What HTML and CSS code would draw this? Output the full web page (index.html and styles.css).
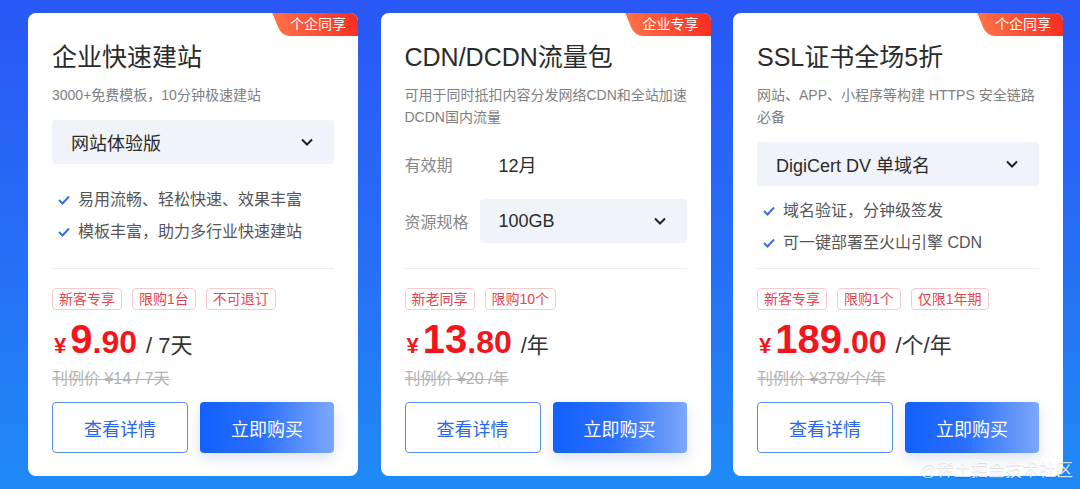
FILE: index.html
```html
<!DOCTYPE html>
<html lang="zh-CN">
<head>
    <meta charset="UTF-8">
    <meta name="viewport" content="width=device-width, initial-scale=1.0">
    <title>云产品特惠</title>
    <link rel="stylesheet" href="styles.css">
</head>
<body>

<div class="page">

    <!-- 企业快速建站 -->
    <div class="card">
        <div class="badge">个企同享</div>
        <div class="head">
            <h2 class="title">企业快速建站</h2>
            <p class="desc">3000+免费模板，10分钟极速建站</p>
            <div class="select">
                <span>网站体验版</span>
                <svg class="chevron" width="12" height="8" viewBox="0 0 12 8"><path d="M1 1.5 6 6.5 11 1.5" /></svg>
            </div>
        </div>
        <ul class="checks">
            <li><svg class="check" width="12" height="10" viewBox="0 0 12 10"><path d="M1 5 4.5 8.5 11 1.5" /></svg>易用流畅、轻松快速、效果丰富</li>
            <li><svg class="check" width="12" height="10" viewBox="0 0 12 10"><path d="M1 5 4.5 8.5 11 1.5" /></svg>模板丰富，助力多行业快速建站</li>
        </ul>
        <div class="foot">
            <div class="tags">
                <span class="tag">新客专享</span>
                <span class="tag">限购1台</span>
                <span class="tag">不可退订</span>
            </div>
            <div class="price">
                <span class="yen">¥</span><span class="int">9</span><span class="dec">.90</span><span class="unit">/ 7天</span>
            </div>
            <div class="origin">刊例价 ¥14 / 7天</div>
            <div class="actions">
                <button class="btn btn-outline">查看详情</button>
                <button class="btn btn-primary">立即购买</button>
            </div>
        </div>
    </div>

    <!-- CDN/DCDN流量包 -->
    <div class="card">
        <div class="badge">企业专享</div>
        <div class="head">
            <h2 class="title">CDN/DCDN流量包</h2>
            <p class="desc">可用于同时抵扣内容分发网络CDN和全站加速DCDN国内流量</p>
            <div class="rows">
                <div class="row">
                    <span class="label">有效期</span>
                    <span class="value">12月</span>
                </div>
                <div class="row">
                    <span class="label">资源规格</span>
                    <div class="select select-grow">
                        <span>100GB</span>
                        <svg class="chevron" width="12" height="8" viewBox="0 0 12 8"><path d="M1 1.5 6 6.5 11 1.5" /></svg>
                    </div>
                </div>
            </div>
        </div>
        <div class="foot">
            <div class="tags">
                <span class="tag">新老同享</span>
                <span class="tag">限购10个</span>
            </div>
            <div class="price">
                <span class="yen">¥</span><span class="int">13</span><span class="dec">.80</span><span class="unit">/年</span>
            </div>
            <div class="origin">刊例价 ¥20 /年</div>
            <div class="actions">
                <button class="btn btn-outline">查看详情</button>
                <button class="btn btn-primary">立即购买</button>
            </div>
        </div>
    </div>

    <!-- SSL证书 -->
    <div class="card">
        <div class="badge">个企同享</div>
        <div class="head">
            <h2 class="title">SSL证书全场5折</h2>
            <p class="desc">网站、APP、小程序等构建 HTTPS 安全链路必备</p>
            <div class="select">
                <span>DigiCert DV 单域名</span>
                <svg class="chevron" width="12" height="8" viewBox="0 0 12 8"><path d="M1 1.5 6 6.5 11 1.5" /></svg>
            </div>
        </div>
        <ul class="checks">
            <li><svg class="check" width="12" height="10" viewBox="0 0 12 10"><path d="M1 5 4.5 8.5 11 1.5" /></svg>域名验证，分钟级签发</li>
            <li><svg class="check" width="12" height="10" viewBox="0 0 12 10"><path d="M1 5 4.5 8.5 11 1.5" /></svg>可一键部署至火山引擎 CDN</li>
        </ul>
        <div class="foot">
            <div class="tags">
                <span class="tag">新客专享</span>
                <span class="tag">限购1个</span>
                <span class="tag">仅限1年期</span>
            </div>
            <div class="price">
                <span class="yen">¥</span><span class="int">189</span><span class="dec">.00</span><span class="unit">/个/年</span>
            </div>
            <div class="origin">刊例价 ¥378/个/年</div>
            <div class="actions">
                <button class="btn btn-outline">查看详情</button>
                <button class="btn btn-primary">立即购买</button>
            </div>
        </div>
    </div>

    <div class="watermark">@稀土掘金技术社区</div>
</div>

</body>
</html>
```

FILE: styles.css
```css
body {
    margin: 0;
    font-family: "Liberation Sans", "Noto Sans CJK SC", sans-serif;
}
.page {
    position: relative;
    width: 1080px;
    height: 489px;
    box-sizing: border-box;
    padding: 13px 0 0 28px;
    display: flex;
    align-items: flex-start;
    gap: 22.5px;
    overflow: hidden;
    background: linear-gradient(180deg, #2a57f5 0%, #2670f5 55%, #1f8bf6 100%);
}
.card {
    position: relative;
    width: 330px;
    height: 463px;
    box-sizing: border-box;
    padding: 28px 24px 23px;
    background: #fff;
    border-radius: 8px;
    overflow: hidden;
    display: flex;
    flex-direction: column;
    flex-shrink: 0;
}

/* 角标 */
.badge {
    position: absolute;
    top: 0;
    right: 0;
    z-index: 1;
    width: 80px;
    height: 23px;
    line-height: 23px;
    text-align: center;
    font-size: 14px;
    color: #fff;
}
.badge::before {
    content: '';
    position: absolute;
    top: 0;
    bottom: 0;
    left: -1px;
    right: -12px;
    z-index: -1;
    background: linear-gradient(90deg, #ff6f47, #f5241c);
    transform: skewX(22deg);
    border-bottom-left-radius: 8px;
}

.title {
    margin: 0;
    font-size: 25px;
    line-height: 32px;
    font-weight: 400;
    color: #2b2b2b;
}
.desc {
    margin: 11px -6px 0 0;
    font-size: 14px;
    line-height: 22px;
    color: #808080;
}
.select {
    margin-top: 14px;
    height: 44px;
    box-sizing: border-box;
    padding: 0 21px 0 19px;
    display: flex;
    align-items: center;
    justify-content: space-between;
    background: #f0f3f9;
    border-radius: 4px;
    font-size: 18px;
    color: #2b2b2b;
}
.chevron path {
    fill: none;
    stroke: #222;
    stroke-width: 2;
}

.rows {
    margin-top: 14px;
    display: flex;
    flex-direction: column;
    gap: 13px;
}
.row {
    display: flex;
    align-items: center;
    height: 44px;
}
.label {
    width: 75px;
    flex-shrink: 0;
    font-size: 16px;
    color: #888;
}
.value {
    padding-left: 19px;
    font-size: 18px;
    color: #2b2b2b;
}
.select-grow {
    flex: 1;
    margin-top: 0;
}

.checks {
    flex: 1;
    margin: 0;
    padding: 0 0 0 6px;
    list-style: none;
    display: flex;
    flex-direction: column;
    justify-content: center;
    gap: 8px;
}
.checks li {
    display: flex;
    align-items: center;
    font-size: 16px;
    line-height: 24px;
    color: #555;
}
.check {
    margin-right: 8px;
    flex-shrink: 0;
}
.check path {
    fill: none;
    stroke: #3a6cf2;
    stroke-width: 2;
}

.foot {
    margin-top: auto;
    border-top: 1px solid #eeeeee;
    padding-top: 19px;
}
.tags {
    display: flex;
    gap: 10px;
}
.tag {
    height: 22px;
    box-sizing: border-box;
    padding: 0 6px;
    border: 1px solid #f7cbce;
    border-radius: 4px;
    font-size: 14px;
    line-height: 20px;
    color: #e4464f;
}
.price {
    margin-top: 9px;
    height: 44px;
    display: flex;
    align-items: baseline;
    color: #f2161c;
    font-weight: bold;
}
.price span {
    line-height: 1;
}
.yen {
    font-size: 22px;
    margin: 0 4px 0 2px;
}
.int {
    font-size: 40px;
}
.dec {
    font-size: 32px;
}
.unit {
    margin-left: 9px;
    font-size: 22px;
    font-weight: normal;
    color: #333;
}
.origin {
    margin-top: 5px;
    font-size: 16px;
    line-height: 22px;
    color: #b3b3b3;
    text-decoration: line-through;
}
.actions {
    margin-top: 12px;
    display: flex;
    gap: 12px;
}
.btn {
    flex: 1;
    height: 51px;
    border-radius: 4px;
    font-family: inherit;
    font-size: 18px;
    cursor: pointer;
}
.btn-outline {
    background: #fff;
    border: 1px solid #5b8cf0;
    color: #2d66e6;
}
.btn-primary {
    border: none;
    color: #fff;
    background: linear-gradient(90deg, #1260fe 0%, #2a6ffd 45%, #7ca8fb 100%);
    box-shadow: 0 6px 14px rgba(30, 70, 160, 0.15);
}

.watermark {
    position: absolute;
    right: 7px;
    bottom: 8px;
    font-size: 17px;
    color: rgba(255, 255, 255, 0.8);
    text-shadow: 0 1px 1px rgba(0, 0, 0, 0.15);
}
```
